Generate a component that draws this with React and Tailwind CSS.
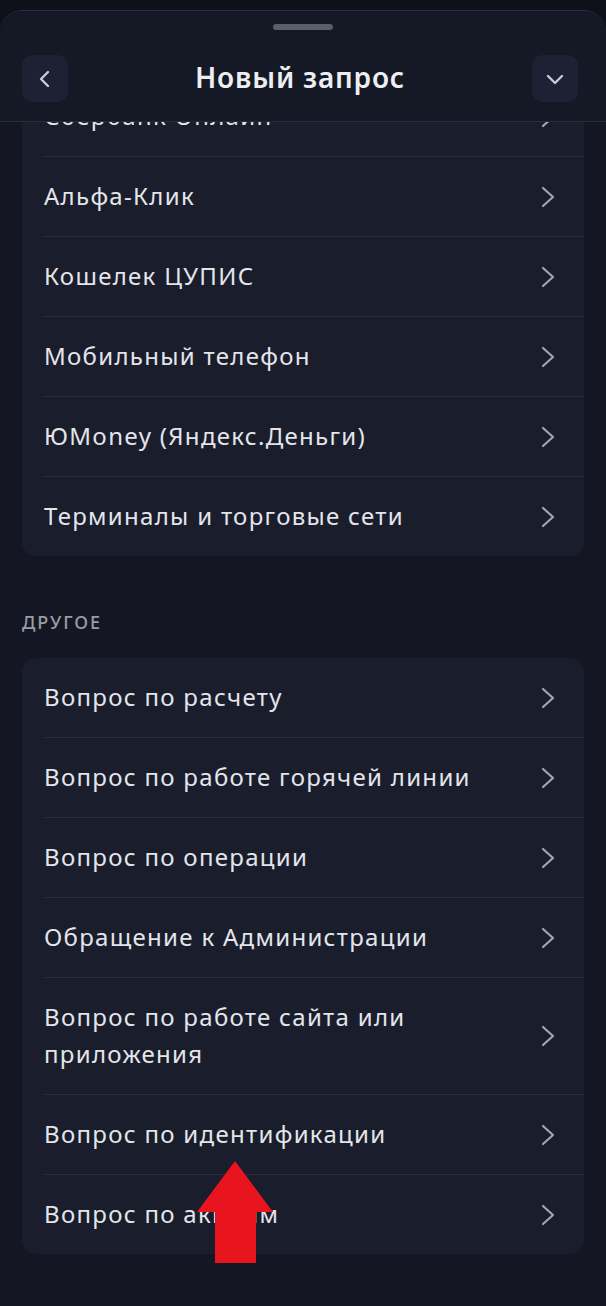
import React from "react";

const font = { fontFamily: '"Noto Sans", Roboto, "DejaVu Sans", sans-serif' };

function Chevron() {
  return (
    <svg width="16" height="22" viewBox="0 0 16 22" fill="none" className="shrink-0">
      <polyline points="3,2 13,11 3,20" stroke="#a3a5ae" strokeWidth="2.2" strokeLinecap="round" strokeLinejoin="round" />
    </svg>
  );
}

function Row({ text, last }) {
  return (
    <div className={"ml-[22px] flex items-center justify-between pr-[28px] py-[21px] " + (last ? "" : "border-b border-[#2a2d3c]")}>
      <span className="text-[24px] leading-[37px] font-normal text-[#e4e5ea] tracking-[1.3px] max-w-[440px] -translate-y-[1px]">{text}</span>
      <Chevron />
    </div>
  );
}

function Card({ items }) {
  return (
    <div className="rounded-[14px] bg-[#1a1d2c]">
      {items.map((t, i) => (
        <Row key={t} text={t} last={i === items.length - 1} />
      ))}
    </div>
  );
}

export default function App() {
  const first = [
    "Сбербанк Онлайн",
    "Альфа-Клик",
    "Кошелек ЦУПИС",
    "Мобильный телефон",
    "ЮMoney (Яндекс.Деньги)",
    "Терминалы и торговые сети",
  ];
  const second = [
    "Вопрос по расчету",
    "Вопрос по работе горячей линии",
    "Вопрос по операции",
    "Обращение к Администрации",
    "Вопрос по работе сайта или приложения",
    "Вопрос по идентификации",
    "Вопрос по акциям",
  ];
  return (
    <div className="relative w-full h-[1306px] bg-[#0f111a] pt-[10px] overflow-hidden" style={font}>
      <div className="h-full flex flex-col rounded-t-[22px] bg-[#141723] border-t border-[#2a2e3f]">
        <div className="relative z-10 bg-[#151825] rounded-t-[22px] border-b border-[#282c3b] h-[111px] flex flex-col">
          <div className="mx-auto mt-[13px] w-[60px] h-[6px] rounded-full bg-[#5b5e69]" />
          <div className="mt-[25px] pl-[22px] pr-[28px] flex items-center justify-between">
            <div className="w-[46px] h-[47px] rounded-[11px] bg-[#1d2133] flex items-center justify-center">
              <svg width="18" height="22" viewBox="0 0 18 22" fill="none">
                <polyline points="12,4 5,11 12,18" stroke="#c9cad2" strokeWidth="2.4" strokeLinecap="round" strokeLinejoin="round" />
              </svg>
            </div>
            <div className="text-[28px] leading-[36px] font-semibold text-[#eceef2] tracking-[0.8px] -translate-y-[2px]">Новый запрос</div>
            <div className="w-[46px] h-[47px] rounded-[11px] bg-[#1d2133] flex items-center justify-center">
              <svg width="22" height="18" viewBox="0 0 22 18" fill="none">
                <polyline points="4,6 11,13 18,6" stroke="#c9cad2" strokeWidth="2.4" strokeLinecap="round" strokeLinejoin="round" />
              </svg>
            </div>
          </div>
        </div>
        <div className="flex-1 overflow-hidden">
          <div className="-mt-[45px] px-[22px]">
            <Card items={first} />
            <div className="mt-[55px] mb-[25px] text-[18px] leading-[22px] font-medium text-[#9a9ca6] tracking-[2px]">ДРУГОЕ</div>
            <Card items={second} />
          </div>
        </div>
      </div>
      <svg className="absolute left-[196px] top-[1160px]" width="78" height="104" viewBox="0 0 78 104">
        <polygon points="39,1 77,52 60,52 60,103 19,103 19,52 1,52" fill="#e8141e" />
      </svg>
    </div>
  );
}
